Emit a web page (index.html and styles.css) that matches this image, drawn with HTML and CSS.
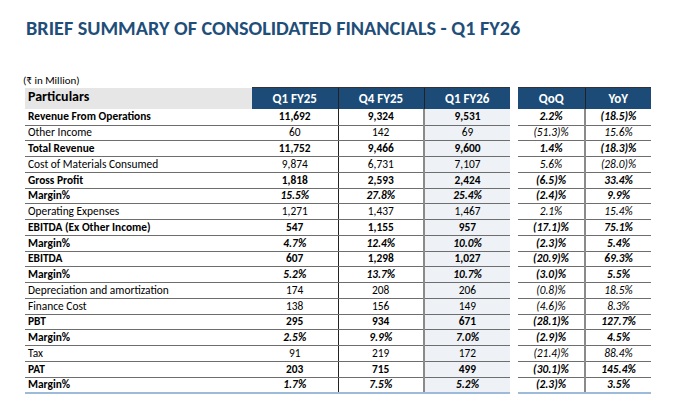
FILE: index.html
```html
<!DOCTYPE html>
<html>
<head>
<meta charset="utf-8">
<link rel="stylesheet" href="styles.css">
</head>
<body>
<h1 class="title">BRIEF SUMMARY OF CONSOLIDATED FINANCIALS - Q1 FY26</h1>
<div class="unit">(₹ in Million)</div>
<div class="tables">
  <table class="fin">
    <thead>
      <tr><th class="part">Particulars</th><th class="q c1">Q1 FY25</th><th class="q c2">Q4 FY25</th><th class="q c3">Q1 FY26</th></tr>
    </thead>
    <tbody>
      <tr class="b"><td class="lbl">Revenue From Operations</td><td class="c1">11,692</td><td class="c2">9,324</td><td class="c3">9,531</td></tr>
      <tr><td class="lbl">Other Income</td><td class="c1">60</td><td class="c2">142</td><td class="c3">69</td></tr>
      <tr class="b"><td class="lbl">Total Revenue</td><td class="c1">11,752</td><td class="c2">9,466</td><td class="c3">9,600</td></tr>
      <tr><td class="lbl">Cost of Materials Consumed</td><td class="c1">9,874</td><td class="c2">6,731</td><td class="c3">7,107</td></tr>
      <tr class="b"><td class="lbl">Gross Profit</td><td class="c1">1,818</td><td class="c2">2,593</td><td class="c3">2,424</td></tr>
      <tr class="b m"><td class="lbl">Margin%</td><td class="c1">15.5%</td><td class="c2">27.8%</td><td class="c3">25.4%</td></tr>
      <tr><td class="lbl">Operating Expenses</td><td class="c1">1,271</td><td class="c2">1,437</td><td class="c3">1,467</td></tr>
      <tr class="b"><td class="lbl">EBITDA (Ex Other Income)</td><td class="c1">547</td><td class="c2">1,155</td><td class="c3">957</td></tr>
      <tr class="b m"><td class="lbl">Margin%</td><td class="c1">4.7%</td><td class="c2">12.4%</td><td class="c3">10.0%</td></tr>
      <tr class="b"><td class="lbl">EBITDA</td><td class="c1">607</td><td class="c2">1,298</td><td class="c3">1,027</td></tr>
      <tr class="b m"><td class="lbl">Margin%</td><td class="c1">5.2%</td><td class="c2">13.7%</td><td class="c3">10.7%</td></tr>
      <tr><td class="lbl">Depreciation and amortization</td><td class="c1">174</td><td class="c2">208</td><td class="c3">206</td></tr>
      <tr><td class="lbl">Finance Cost</td><td class="c1">138</td><td class="c2">156</td><td class="c3">149</td></tr>
      <tr class="b"><td class="lbl">PBT</td><td class="c1">295</td><td class="c2">934</td><td class="c3">671</td></tr>
      <tr class="b m"><td class="lbl">Margin%</td><td class="c1">2.5%</td><td class="c2">9.9%</td><td class="c3">7.0%</td></tr>
      <tr><td class="lbl">Tax</td><td class="c1">91</td><td class="c2">219</td><td class="c3">172</td></tr>
      <tr class="b"><td class="lbl">PAT</td><td class="c1">203</td><td class="c2">715</td><td class="c3">499</td></tr>
      <tr class="b m"><td class="lbl">Margin%</td><td class="c1">1.7%</td><td class="c2">7.5%</td><td class="c3">5.2%</td></tr>
    </tbody>
  </table>
  <table class="fin growth">
    <thead>
      <tr><th class="q g1">QoQ</th><th class="q g2">YoY</th></tr>
    </thead>
    <tbody>
      <tr class="b"><td class="g1">2.2%</td><td class="g2">(18.5)%</td></tr>
      <tr><td class="g1">(51.3)%</td><td class="g2">15.6%</td></tr>
      <tr class="b"><td class="g1">1.4%</td><td class="g2">(18.3)%</td></tr>
      <tr><td class="g1">5.6%</td><td class="g2">(28.0)%</td></tr>
      <tr class="b"><td class="g1">(6.5)%</td><td class="g2">33.4%</td></tr>
      <tr class="b"><td class="g1">(2.4)%</td><td class="g2">9.9%</td></tr>
      <tr><td class="g1">2.1%</td><td class="g2">15.4%</td></tr>
      <tr class="b"><td class="g1">(17.1)%</td><td class="g2">75.1%</td></tr>
      <tr class="b"><td class="g1">(2.3)%</td><td class="g2">5.4%</td></tr>
      <tr class="b"><td class="g1">(20.9)%</td><td class="g2">69.3%</td></tr>
      <tr class="b"><td class="g1">(3.0)%</td><td class="g2">5.5%</td></tr>
      <tr><td class="g1">(0.8)%</td><td class="g2">18.5%</td></tr>
      <tr><td class="g1">(4.6)%</td><td class="g2">8.3%</td></tr>
      <tr class="b"><td class="g1">(28.1)%</td><td class="g2">127.7%</td></tr>
      <tr class="b"><td class="g1">(2.9)%</td><td class="g2">4.5%</td></tr>
      <tr><td class="g1">(21.4)%</td><td class="g2">88.4%</td></tr>
      <tr class="b"><td class="g1">(30.1)%</td><td class="g2">145.4%</td></tr>
      <tr class="b"><td class="g1">(2.3)%</td><td class="g2">3.5%</td></tr>
    </tbody>
  </table>
</div>
</body>
</html>
```
FILE: styles.css
```css
html, body {
  margin: 0;
  padding: 0;
  background: #ffffff;
}
body {
  font-family: Carlito, Lato, "Noto Sans", sans-serif;
  color: #000;
  width: 690px;
  height: 408px;
  overflow: hidden;
}
.title {
  margin: 0;
  padding: 16px 0 0 26px;
  font-size: 20.2px;
  line-height: 24px;
  font-weight: 700;
  color: #1f4e79;
  letter-spacing: 0;
}
.unit {
  margin: 35px 0 0 23px;
  font-size: 11px;
  line-height: 12px;
  height: 12px;
}
.tables {
  display: flex;
  align-items: flex-start;
  gap: 8px;
  padding-left: 25px;
}
.fin {
  border-collapse: collapse;
  table-layout: fixed;
  font-size: 11.4px;
}
.fin th {
  height: 21px;
  padding: 0;
  font-weight: 700;
  vertical-align: bottom;
  box-sizing: border-box;
}
.fin th.part {
  width: 227px;
  background: #e7e6e6;
  text-align: left;
  font-size: 14px;
  line-height: 16px;
  padding: 0 0 4px 3px;
  vertical-align: top;
  padding-top: 1px;
}
.fin th.q {
  background: #1b4b76;
  color: #fff;
  font-size: 13px;
  line-height: 16px;
  padding-bottom: 2px;
  border-top: 1px solid #333;
}
.fin .c1 { width: 86px; }
.fin .c2 { width: 86px; border-left: 1px solid #222; }
.fin .c3 { width: 86px; border-left: 2px solid #8a8a8a; }
.fin th.c2, .fin th.c3 { border-left: 1px solid #222; }
.fin td.c3 { background: #eef2f6; }
.fin .g1 { width: 67px; }
.fin .g2 { width: 66px; border-left: 2px solid #8a8a8a; }
.fin th.g2 { border-left: 1px solid #222; }
.fin td {
  height: 15.75px;
  padding: 0;
  line-height: 13px;
  text-align: center;
  border-bottom: 1px solid #6e6e6e;
  box-sizing: border-box;
}
.fin td.lbl {
  text-align: left;
  padding-left: 3px;
}
.fin tbody tr:first-child td { height: 16.5px; }
.fin tbody tr:last-child td { border-bottom: 2px solid #9dbbd8; }
.fin tr.b td { font-weight: 700; }
.fin tr.m td { font-style: italic; }
.fin tr.m td.lbl { font-style: normal; }
.growth td { font-style: italic; color: #000; }
```
